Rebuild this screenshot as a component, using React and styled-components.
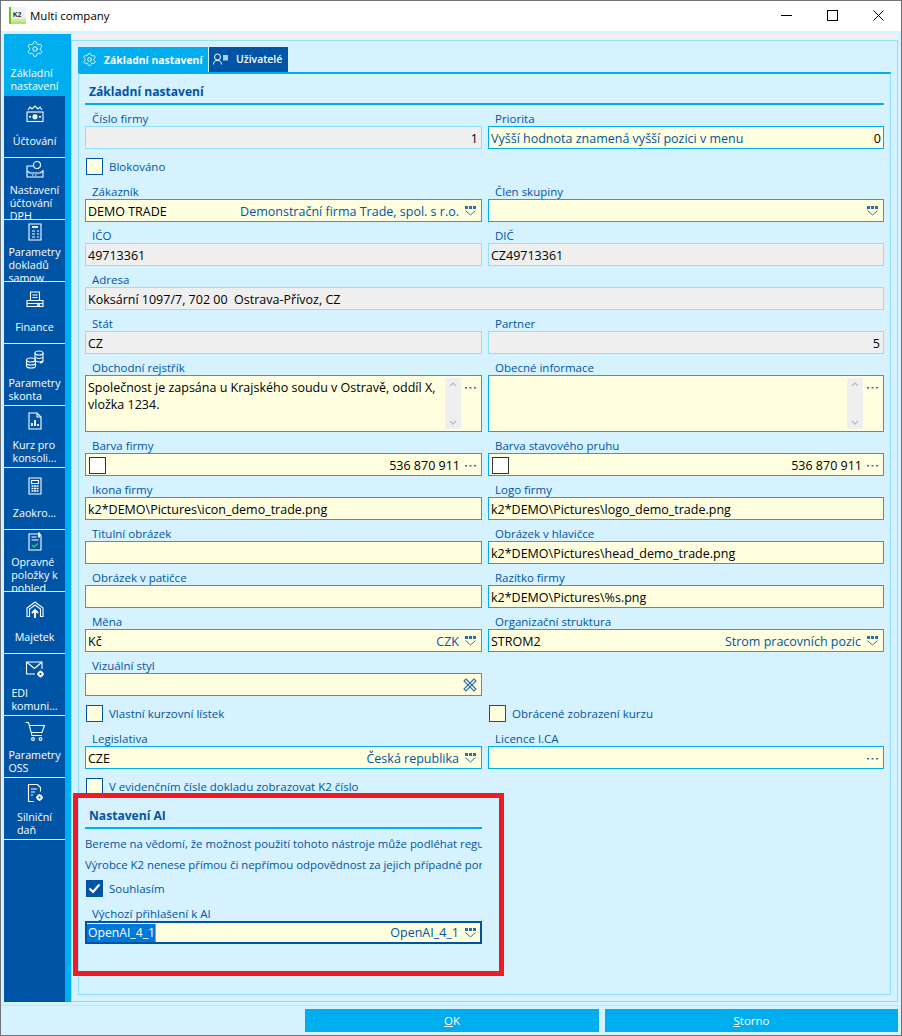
import React from 'react';
import styled, { createGlobalStyle } from 'styled-components';
import { Settings } from 'lucide-react';

const GlobalStyle = createGlobalStyle`
  html, body {
    margin: 0;
    padding: 0;
    background: #d7f2ff;
  }
  * {
    box-sizing: border-box;
  }
`;

const Window = styled.div`
  width: 902px;
  height: 1036px;
  display: flex;
  flex-direction: column;
  border: 1px solid #6f7478;
  background: #d7f2ff;
  font-family: 'Open Sans', 'Noto Sans', 'Liberation Sans', sans-serif;
  font-size: 11.5px;
  overflow: hidden;
`;

const TitleBar = styled.div`
  height: 30px;
  flex: none;
  display: flex;
  align-items: center;
  background: #fff;
  padding: 0 0 2px 8px;
  color: #000;
  font-size: 11.5px;
`;

const TitleText = styled.span`
  margin-left: 4px;
  flex: 1;
`;

const WinButton = styled.div`
  width: 46px;
  height: 28px;
  display: flex;
  align-items: center;
  justify-content: center;
`;

const Body = styled.div`
  flex: 1;
  min-height: 0;
  display: flex;
  padding: 3px 3px 0 3px;
`;

const Sidebar = styled.div`
  width: 67px;
  flex: none;
  background: #0054a6;
  border-right: 6px solid #00aeef;
`;

const NavItem = styled.div`
  height: 62px;
  overflow: hidden;
  color: #fff;
  background: ${(props) => (props.$active ? '#00aeef' : '#0054a6')};
  border-bottom: ${(props) => (props.$active ? 'none' : '1px solid #d7f2ff')};
`;

/* the icon sits higher the more lines of text the item has */
const NavIcon = styled.div`
  height: 22px;
  margin-top: ${(props) => 7 - (props.$lines - 1) * 3}px;
  margin-bottom: ${(props) => (props.$lines - 1) * 3 - 3}px;
  display: flex;
  align-items: center;
  justify-content: center;
`;

const NavText = styled.div`
  height: 39px;
  display: flex;
  flex-direction: column;
  justify-content: center;
  align-items: center;
  line-height: 13px;
  font-size: 10.7px;
`;

const NavLines = styled.div`
  text-align: left;
  white-space: nowrap;
`;

const Main = styled.div`
  flex: 1;
  min-width: 0;
  display: flex;
  flex-direction: column;
`;

const TopStrip = styled.div`
  height: 6px;
  flex: none;
  background: #efefef;
`;

const Panel = styled.div`
  flex: 1;
  min-height: 0;
  display: flex;
  flex-direction: column;
  border: 1px solid #8fdfff;
  padding: 6px;
`;

const Tabs = styled.div`
  height: 25px;
  flex: none;
  display: flex;
`;

const Tab = styled.div`
  width: ${(props) => props.$width}px;
  height: ${(props) => (props.$active ? 27 : 25)}px;
  margin-right: 1px;
  display: flex;
  align-items: center;
  gap: ${(props) => props.$gap}px;
  padding: 0 0 2px 4px;
  color: #fff;
  font-weight: ${(props) => (props.$active ? 700 : 600)};
  background: ${(props) => (props.$active ? '#00aeef' : '#0054a6')};
  font-size: 10.4px;
  white-space: nowrap;
`;

const TabPanel = styled.div`
  flex: 1;
  min-height: 0;
  border: 1px solid #8fdfff;
  border-top: 2px solid #00aeef;
  padding: 0 6px;
`;

const SectionHeading = styled.div`
  height: 31px;
  padding: 10px 0 0 4px;
  line-height: 16px;
  font-size: 12.1px;
  font-weight: 700;
  color: #0054a6;
  border-bottom: 2px solid #00aeef;
`;

const FormGrid = styled.div`
  display: grid;
  grid-template-columns: 397px 1fr;
  column-gap: 6px;
`;

const FieldLabel = styled.div`
  height: 21px;
  padding-left: 7px;
  display: flex;
  align-items: flex-end;
  line-height: 14px;
  color: #0054a6;
  white-space: nowrap;
`;

const Box = styled.div`
  height: ${(props) => props.$height || 23}px;
  display: flex;
  align-items: ${(props) => (props.$multi ? 'flex-start' : 'center')};
  padding: ${(props) => (props.$multi ? '2px 2px 0 2px' : props.$focus ? '0 1px 0 0' : '1px 2px 0 2px')};
  border: ${(props) => (props.$focus ? '2px' : '1px')} solid
    ${(props) => (props.$disabled ? '#8fdfff' : props.$focus ? '#0054a6' : '#00aeef')};
  background: ${(props) => (props.$disabled ? '#efefef' : '#ffffdf')};
  color: #000;
  font-size: 12.5px;
  overflow: hidden;
  white-space: nowrap;
`;

const Value = styled.span`
  flex: ${(props) => (props.$right ? '1' : 'none')};
  text-align: ${(props) => (props.$right ? 'right' : 'left')};
  padding-right: ${(props) => (props.$right ? '1px' : '0')};
`;

const Hint = styled.span`
  flex: 1;
  text-align: ${(props) => (props.$left ? 'left' : 'right')};
  color: #0054a6;
  padding-right: ${(props) => (props.$left ? '4px' : '6px')};
  padding-left: ${(props) => (props.$left ? '0' : '4px')};
`;

const MultiText = styled.div`
  flex: 1;
  min-width: 0;
  padding-top: 1px;
  line-height: 17px;
  white-space: pre-line;
`;

const Scroll = styled.div`
  width: 16px;
  height: 51px;
  flex: none;
  background: #efefef;
  display: flex;
  flex-direction: column;
  justify-content: space-between;
  align-items: center;
  padding: 4px 0;
`;

const Swatch = styled.div`
  width: 17px;
  height: 17px;
  flex: none;
  margin-left: 1px;
  background: #fff;
  border: 1px solid #333;
`;

const DotsSlot = styled.div`
  flex: none;
  display: flex;
  margin: ${(props) => (props.$top ? '8px 2px 0 3px' : '0 2px 0 3px')};
`;

const CheckRow = styled.div`
  height: ${(props) => (props.$compact ? 25 : 29)}px;
  padding: ${(props) => (props.$compact ? 5 : 9)}px 0 0 1px;
  display: flex;
  align-items: flex-start;
  gap: 6px;
  color: #0054a6;
  line-height: 17px;
  white-space: nowrap;
`;

const CheckMark = styled.div`
  width: 17px;
  height: 17px;
  flex: none;
  display: flex;
  align-items: center;
  justify-content: center;
  border: 1px solid #0054a6;
  background: ${(props) => (props.$checked ? '#0054a6' : '#ffffdf')};
`;

const AiSection = styled.div`
  position: relative;
  grid-column: 1;
`;

const RedFrame = styled.div`
  position: absolute;
  top: -5px;
  left: -12px;
  width: 431px;
  height: 183px;
  border: 5px solid #ed1c24;
  pointer-events: none;
`;

const AiLines = styled.div`
  margin-top: 4px;
  color: #0054a6;
  font-size: 11.35px;
  overflow: hidden;
  white-space: nowrap;
`;

const AiLine = styled.div`
  height: 21px;
  line-height: 21px;
`;

const Selected = styled.span`
  flex: none;
  height: 18px;
  line-height: 18px;
  padding-left: 1px;
  background: #0078d7;
  color: #fff;
  font-size: 12.2px;
  border-right: 1px solid #e08a3c;
`;

const Footer = styled.div`
  height: 33px;
  flex: none;
  padding: 3px 3px 3px 0;
  display: flex;
  flex-direction: column;
`;

const FooterLine = styled.div`
  height: 1px;
  flex: none;
  background: #b4eaff;
  margin-bottom: 3px;
`;

const Buttons = styled.div`
  display: flex;
  justify-content: flex-end;
  gap: 6px;
`;

const Button = styled.div`
  width: ${(props) => props.$width}px;
  height: 23px;
  display: flex;
  align-items: center;
  justify-content: center;
  background: #00aeef;
  color: #fff;
`;

const stroke = { fill: 'none', stroke: '#fff', strokeWidth: 1.1 };

const NavSvg = ({ children }) => (
  <svg width="22" height="22" viewBox="0 0 22 22" {...stroke}>
    {children}
  </svg>
);

const icons = {
  gear: <Settings size={18} strokeWidth={1.2} color="#fff" />,
  money: (
    <NavSvg>
      <path d="M4 7l2-3 2 2 3-3 3 3 2-2 2 3" />
      <rect x="3" y="9" width="16" height="9.500" />
      <circle cx="11" cy="13.800" r="2" fill="#fff" />
      <path d="M5 13.800h2M15 13.800h2" strokeWidth="1.600" />
    </NavSvg>
  ),
  tax: (
    <NavSvg>
      <circle cx="13" cy="6" r="3.500" />
      <path d="M9 7H3v11h16v-7" />
      <path d="M3 12l3 2h10l3-2" />
      <path d="M8 16h6" strokeDasharray="1.500 1.500" />
    </NavSvg>
  ),
  doc: (
    <NavSvg>
      <path d="M5 3h12v16H5z" />
      <path d="M8 6h6" strokeWidth="1.800" />
      <path d="M8 10h3M8 13h3M8 16h3M13 10h2M13 13h2M13 16h2" />
    </NavSvg>
  ),
  printer: (
    <NavSvg>
      <path d="M6.500 11V3h9v8" />
      <path d="M8.500 6h5M8.500 8.500h5" />
      <path d="M3 11.500h16v6H3z" />
      <path d="M3 14.500h16" />
      <path d="M13 16h3" strokeWidth="1.600" />
    </NavSvg>
  ),
  coins: (
    <NavSvg>
      <ellipse cx="15" cy="5" rx="4" ry="2" />
      <path d="M11 5v9M19 5v8c0 1-1.500 1.800-3 2M11 8.500c0 1 2 2 4 2s4-1 4-2M11 12c0 1 2 2 4 2s4-1 4-2" />
      <ellipse cx="7" cy="12" rx="4.500" ry="2" />
      <path d="M2.500 12v6c0 1 2 2 4.500 2s4.500-1 4.500-2v-6M2.500 15c0 1 2 2 4.500 2s4.500-1 4.500-2" />
    </NavSvg>
  ),
  chart: (
    <NavSvg>
      <path d="M5 3h8l4 4v12H5z" />
      <path d="M13 3v4h4" />
      <path d="M8 16v-3M11 16v-6M14 16v-2" strokeWidth="1.800" />
    </NavSvg>
  ),
  calc: (
    <NavSvg>
      <path d="M5 3h12v16H5z" />
      <path d="M7.500 5.500h7v3h-7z" />
      <path
        d="M7.500 11h2M10 11h2M12.500 11h2M7.500 13.500h2M10 13.500h2M12.500 13.500h2M7.500 16h2M10 16h2M12.500 16h2"
        strokeWidth="1.300"
      />
    </NavSvg>
  ),
  check: (
    <NavSvg>
      <path d="M5 3h11l1 1.500V19H5z" />
      <path d="M15 1.500v5" strokeWidth="1.800" />
      <path d="M7.500 6h5M7.500 9h7" />
      <path d="M8 14l2 2 4-3.500" stroke="#39c46a" strokeWidth="1.400" />
    </NavSvg>
  ),
  asset: (
    <NavSvg>
      <path d="M3 9l8-6 8 6v8.500h-2.500V10L11 6 5.500 10v7.500H3z" />
      <path d="M11 19v-8M8 14l3-3 3 3" strokeWidth="1.800" />
    </NavSvg>
  ),
  mail: (
    <NavSvg>
      <path d="M11 16H2.500V4h15.500v7" />
      <path d="M2.500 4l8 6.500L18 4" />
      <circle cx="16.500" cy="16" r="2" strokeWidth="1.800" />
      <path d="M16.500 12.500v1.500M16.500 18v1.500M13 16h1.500M18.500 16H20" strokeWidth="1.400" />
    </NavSvg>
  ),
  cart: (
    <NavSvg>
      <path d="M1.500 2.500h3l3.500 13h10" />
      <path d="M5.500 5.500h15l-2.500 7H7.500" />
      <circle cx="9" cy="19" r="1.400" />
      <circle cx="16.500" cy="19" r="1.400" />
    </NavSvg>
  ),
  road: (
    <NavSvg>
      <path d="M10 19.500H4.500v-17h9l3 3v4" />
      <path d="M7 7h6M7 10h4M7 13h2" />
      <circle cx="15.500" cy="15.500" r="2" strokeWidth="1.800" />
      <path d="M15.500 12v1.500M15.500 17.500V19M12 15.500h1.500M17.500 15.500H19" strokeWidth="1.400" />
    </NavSvg>
  ),
};

const navItems = [
  { icon: 'gear', lines: ['Základní', 'nastavení'], active: true },
  { icon: 'money', lines: ['Účtování'] },
  { icon: 'tax', lines: ['Nastavení', 'účtování', 'DPH'] },
  { icon: 'doc', lines: ['Parametry', 'dokladů', 'samow'] },
  { icon: 'printer', lines: ['Finance'] },
  { icon: 'coins', lines: ['Parametry', 'skonta'] },
  { icon: 'chart', lines: ['Kurz pro', 'konsoli...'] },
  { icon: 'calc', lines: ['Zaokro...'] },
  { icon: 'check', lines: ['Opravné', 'položky k', 'pohled'] },
  { icon: 'asset', lines: ['Majetek'] },
  { icon: 'mail', lines: ['EDI', 'komuni...'] },
  { icon: 'cart', lines: ['Parametry', 'OSS'] },
  { icon: 'road', lines: ['Silniční', 'daň'] },
];

const Pick = () => (
  <svg width="12" height="10" viewBox="0 0 12 10" style={{ flex: 'none', marginRight: 2 }}>
    <path d="M0 0h3v3H0zM4 0h3v3H4zM8 0h3v3H8z" fill="#2a70b0" />
    <path d="M0.500 4.500L5.500 9l5-4.500" fill="none" stroke="#2a70b0" />
  </svg>
);

const Dots = ({ top }) => (
  <DotsSlot $top={top}>
    <svg width="13" height="3" viewBox="0 0 13 3">
      <path d="M1 1h2v1.500H1zM5.500 1h2v1.500h-2zM10 1h2v1.500h-2z" fill="#2a70b0" />
    </svg>
  </DotsSlot>
);

const Clear = () => (
  <svg width="14" height="14" viewBox="0 0 14 14" style={{ flex: 'none', marginRight: 2 }}>
    <g fill="none" stroke="#2a70b0" strokeWidth="1.100">
      <path d="M3 1l10 10-2 2L1 3z" />
      <path d="M11 1L1 11l2 2L13 3z" />
    </g>
  </svg>
);

const Arrow = ({ up }) => (
  <svg width="8" height="5" viewBox="0 0 8 5">
    <path d={up ? 'M1 4l3-3 3 3' : 'M1 1l3 3 3-3'} fill="none" stroke="#bdbdbd" strokeWidth="1.400" />
  </svg>
);

const Field = ({ label, children, ...boxProps }) => (
  <div>
    <FieldLabel>{label}</FieldLabel>
    <Box {...boxProps}>{children}</Box>
  </div>
);

const Check = ({ label, checked, compact }) => (
  <CheckRow $compact={compact}>
    <CheckMark $checked={checked}>
      {checked && (
        <svg width="13" height="11" viewBox="0 0 13 11">
          <path d="M1.500 5.500l3.500 3.500 6.500-7.500" fill="none" stroke="#fff" strokeWidth="2.200" />
        </svg>
      )}
    </CheckMark>
    {label}
  </CheckRow>
);

const ScrollBar = () => (
  <Scroll>
    <Arrow up />
    <Arrow />
  </Scroll>
);

export default function App() {
  return (
    <>
      <GlobalStyle />
      <Window>
        <TitleBar>
          <svg width="17" height="17" viewBox="0 0 17 17">
            <defs>
              <linearGradient id="k2logo" x1="0" y1="0" x2="0" y2="1">
                <stop offset="0.55" stopColor="#f2f2f2" />
                <stop offset="1" stopColor="#a6e05a" />
              </linearGradient>
            </defs>
            <rect width="17" height="17" fill="url(#k2logo)" />
            <rect width="2" height="17" fill="#6cc31e" />
            <text x="4" y="9.500" fontSize="6.500" fontWeight="700" fill="#222" fontFamily="Liberation Sans">
              K2
            </text>
          </svg>
          <TitleText>Multi company</TitleText>
          <WinButton>
            <svg width="11" height="11" viewBox="0 0 11 11">
              <path d="M0 5.500h11" stroke="#000" fill="none" />
            </svg>
          </WinButton>
          <WinButton>
            <svg width="11" height="11" viewBox="0 0 11 11">
              <rect x="0.500" y="0.500" width="10" height="10" stroke="#000" fill="none" />
            </svg>
          </WinButton>
          <WinButton>
            <svg width="11" height="11" viewBox="0 0 11 11">
              <path d="M0.500 0.500l10 10M10.500 0.500l-10 10" stroke="#000" fill="none" />
            </svg>
          </WinButton>
        </TitleBar>
        <Body>
          <Sidebar>
            {navItems.map((item) => (
              <NavItem key={item.lines.join(' ')} $active={item.active}>
                <NavIcon $lines={item.lines.length}>{icons[item.icon]}</NavIcon>
                <NavText>
                  <NavLines>
                    {item.lines.map((line) => (
                      <div key={line}>{line}</div>
                    ))}
                  </NavLines>
                </NavText>
              </NavItem>
            ))}
          </Sidebar>
          <Main>
            <TopStrip />
            <Panel>
              <Tabs>
                <Tab $active $width={130} $gap={7}>
                  <Settings size={15} strokeWidth={1.3} color="#fff" />
                  Základní nastavení
                </Tab>
                <Tab $width={79} $gap={8}>
                  <svg width="15" height="12" viewBox="0 0 15 12" fill="none" stroke="#fff">
                    <circle cx="4.500" cy="4" r="3" />
                    <path d="M0.500 11.500c0-3 1.500-4 4-4s4 1 4 4" />
                    <rect x="10" y="2" width="5" height="5.500" fill="#a9cdea" stroke="none" />
                  </svg>
                  Uživatelé
                </Tab>
              </Tabs>
              <TabPanel>
                <SectionHeading>Základní nastavení</SectionHeading>
                <FormGrid>
                  <Field label="Číslo firmy" $disabled>
                    <Value $right>1</Value>
                  </Field>
                  <Field label="Priorita">
                    <Hint $left>Vyšší hodnota znamená vyšší pozici v menu</Hint>
                    <Value>0</Value>
                  </Field>
                  <Check label="Blokováno" />
                  <div />
                  <Field label="Zákazník">
                    <Value>DEMO TRADE</Value>
                    <Hint>Demonstrační firma Trade, spol. s r.o.</Hint>
                    <Pick />
                  </Field>
                  <Field label="Člen skupiny">
                    <Hint />
                    <Pick />
                  </Field>
                  <Field label="IČO" $disabled>
                    <Value>49713361</Value>
                  </Field>
                  <Field label="DIČ" $disabled>
                    <Value>CZ49713361</Value>
                  </Field>
                </FormGrid>
                <Field label="Adresa" $disabled>
                  <Value>Koksární 1097/7, 702 00&nbsp;&nbsp;Ostrava-Přívoz, CZ</Value>
                </Field>
                <FormGrid>
                  <Field label="Stát" $disabled>
                    <Value>CZ</Value>
                  </Field>
                  <Field label="Partner" $disabled>
                    <Value $right>5</Value>
                  </Field>
                  <Field label="Obchodní rejstřík" $multi $height={57}>
                    <MultiText>
                      {'Společnost je zapsána u Krajského soudu v Ostravě, oddíl X,\nvložka 1234.'}
                    </MultiText>
                    <ScrollBar />
                    <Dots top />
                  </Field>
                  <Field label="Obecné informace" $multi $height={57}>
                    <MultiText />
                    <ScrollBar />
                    <Dots top />
                  </Field>
                  <Field label="Barva firmy">
                    <Swatch />
                    <Value $right>536 870 911</Value>
                    <Dots />
                  </Field>
                  <Field label="Barva stavového pruhu">
                    <Swatch />
                    <Value $right>536 870 911</Value>
                    <Dots />
                  </Field>
                  <Field label="Ikona firmy">
                    <Value>k2*DEMO\Pictures\icon_demo_trade.png</Value>
                  </Field>
                  <Field label="Logo firmy">
                    <Value>k2*DEMO\Pictures\logo_demo_trade.png</Value>
                  </Field>
                  <Field label="Titulní obrázek" />
                  <Field label="Obrázek v hlavičce">
                    <Value>k2*DEMO\Pictures\head_demo_trade.png</Value>
                  </Field>
                  <Field label="Obrázek v patičce" />
                  <Field label="Razítko firmy">
                    <Value>k2*DEMO\Pictures\%s.png</Value>
                  </Field>
                  <Field label="Měna">
                    <Value>Kč</Value>
                    <Hint>CZK</Hint>
                    <Pick />
                  </Field>
                  <Field label="Organizační struktura">
                    <Value>STROM2</Value>
                    <Hint>Strom pracovních pozic</Hint>
                    <Pick />
                  </Field>
                  <Field label="Vizuální styl">
                    <Hint />
                    <Clear />
                  </Field>
                  <div />
                  <Check label="Vlastní kurzovní lístek" />
                  <Check label="Obrácené zobrazení kurzu" />
                  <Field label="Legislativa">
                    <Value>CZE</Value>
                    <Hint>Česká republika</Hint>
                    <Pick />
                  </Field>
                  <Field label="Licence I.CA">
                    <Hint />
                    <Dots />
                  </Field>
                  <Check label="V evidenčním čísle dokladu zobrazovat K2 číslo" />
                  <div />
                  <AiSection>
                    <SectionHeading>Nastavení AI</SectionHeading>
                    <AiLines>
                      <AiLine>Bereme na vědomí, že možnost použití tohoto nástroje může podléhat regulaci.</AiLine>
                      <AiLine>Výrobce K2 nenese přímou či nepřímou odpovědnost za jejich případné porušení.</AiLine>
                    </AiLines>
                    <Check label="Souhlasím" checked compact />
                    <Field label="Výchozí přihlašení k AI" $focus>
                      <Selected>OpenAI_4_1</Selected>
                      <Hint>OpenAI_4_1</Hint>
                      <Pick />
                    </Field>
                    <RedFrame />
                  </AiSection>
                </FormGrid>
              </TabPanel>
            </Panel>
          </Main>
        </Body>
        <Footer>
          <FooterLine />
          <Buttons>
            <Button $width={294}>
              <span>
                <u>O</u>K
              </span>
            </Button>
            <Button $width={293}>
              <span>
                <u>S</u>torno
              </span>
            </Button>
          </Buttons>
        </Footer>
      </Window>
    </>
  );
}
